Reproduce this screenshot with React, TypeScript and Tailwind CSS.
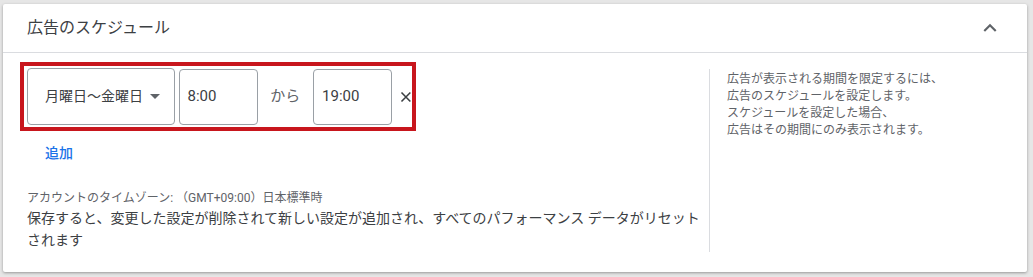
import React from 'react';

const font = { fontFamily: "Roboto, 'Noto Sans CJK JP', 'Noto Sans', sans-serif" };

const App: React.FC = () => {
  return (
    <div className="w-[1033px] h-[277px] bg-[#e6e6e6] pt-[4px] pl-[3px]" style={font}>
      <div className="w-[1024px] h-[268px] bg-white rounded-[2px] shadow-[0_1px_3px_rgba(0,0,0,0.35)] flex flex-col">
        <div className="h-[49px] flex items-center justify-between pl-[24px] pr-[24px] border-b border-[#dadce0]">
          <h2 className="text-[16px] text-[#3c4043] font-normal">広告のスケジュール</h2>
          <svg width="26" height="26" viewBox="0 0 24 24" className="text-[#5f6368]">
            <path d="M7.41 15.41 12 10.83l4.59 4.58L18 14l-6-6-6 6z" fill="currentColor" />
          </svg>
        </div>

        <div className="flex flex-1">
          <div className="w-[706px] pl-[17px] pt-[9px]">
            <div className="w-[396px] h-[69px] border-4 border-[#c8161d] flex items-center pl-[3px] gap-[4px]">
              <button className="w-[149px] h-[57px] border border-[#9aa0a6] rounded-[4px] flex items-center pl-[17px] pr-[14px] justify-between text-[14px] text-[#3c4043] whitespace-nowrap">
                <span>月曜日～金曜日</span>
                <svg width="10" height="5" viewBox="0 0 10 5">
                  <path d="M0 0l5 5 5-5z" fill="#5f6368" />
                </svg>
              </button>
              <div className="w-[80px] h-[56px] border border-[#9aa0a6] rounded-[4px] flex items-center pl-[8px] text-[15px] text-[#3c4043]">
                8:00
              </div>
              <span className="w-[48px] text-center text-[15px] text-[#5f6368]">から</span>
              <div className="w-[80px] h-[56px] border border-[#9aa0a6] rounded-[4px] flex items-center pl-[8px] text-[15px] text-[#3c4043]">
                19:00
              </div>
              <svg width="12" height="12" viewBox="0 0 12 12" className="ml-[4px]">
                <path d="M1.5 1.5l9 9M10.5 1.5l-9 9" stroke="#3c4043" strokeWidth="1.6" />
              </svg>
            </div>

            <div className="pl-[25px] pt-[12px] text-[14px] text-[#1a73e8] font-medium">追加</div>

            <div className="pt-[26px] pl-[7px]">
              <div className="text-[12px] text-[#5f6368] leading-[17px]">アカウントのタイムゾーン: （GMT+09:00）日本標準時</div>
              <div className="text-[14px] text-[#3c4043] leading-[22px] w-[682px]">
                保存すると、変更した設定が削除されて新しい設定が追加され、すべてのパフォーマンス データがリセットされます
              </div>
            </div>
          </div>

          <div className="mt-[16px] mb-[20px] border-l border-[#dadce0] pl-[17px] pt-[2px] text-[12px] text-[#5f6368] leading-[17px]">
            <p>広告が表示される期間を限定するには、</p>
            <p>広告のスケジュールを設定します。</p>
            <p>スケジュールを設定した場合、</p>
            <p>広告はその期間にのみ表示されます。</p>
          </div>
        </div>
      </div>
    </div>
  );
};

export default App;
